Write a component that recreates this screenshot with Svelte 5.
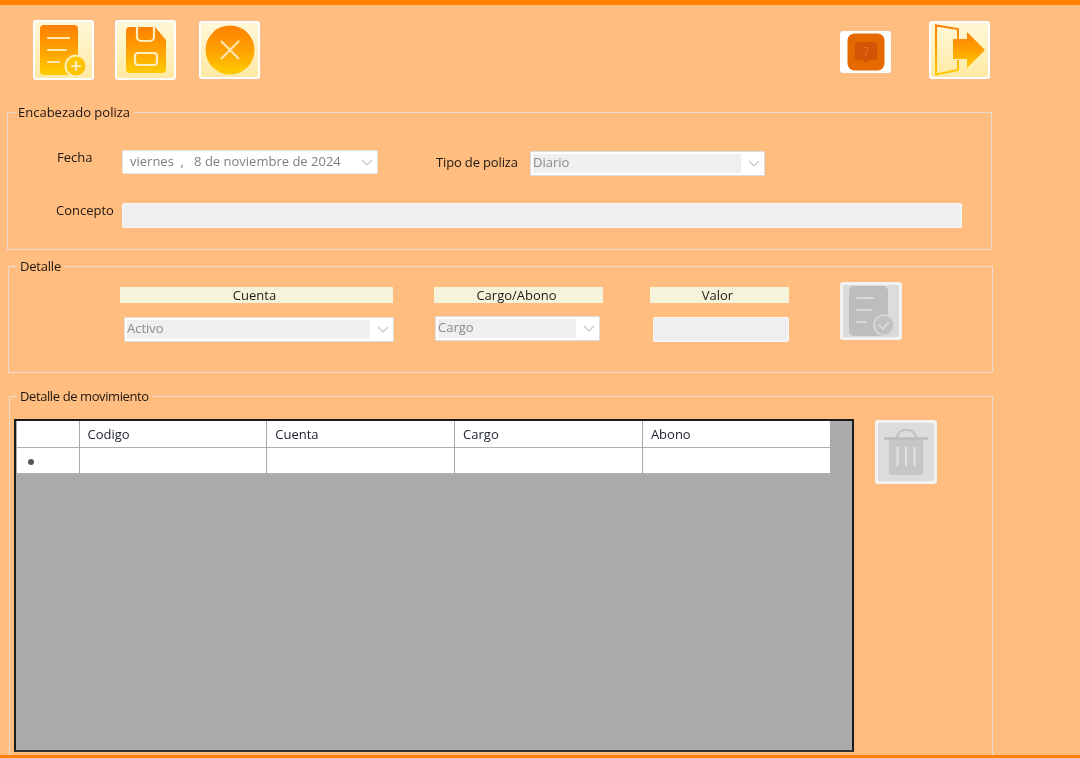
<script>
  const cols = ['Codigo', 'Cuenta', 'Cargo', 'Abono'];
</script>

<div class="page">
  <div class="toolbar">
    <button class="tool b1" aria-label="Nuevo">
      <svg width="50" height="54" viewBox="0 0 50 54">
        <defs>
          <linearGradient id="g" x1="0" y1="0" x2="0" y2="1"><stop offset="0" stop-color="#ff8000"/><stop offset="0.55" stop-color="#ffa400"/><stop offset="1" stop-color="#ffcc00"/></linearGradient>
        </defs>
        <path d="M5 2h30a4 4 0 0 1 4 4v42a4 4 0 0 1-4 4H5a4 4 0 0 1-4-4V6a4 4 0 0 1 4-4z" fill="url(#g)"/>
        <path d="M9 15h21M9 27h18M9 39h11" stroke="#ffe9b0" stroke-width="2.2" fill="none" stroke-linecap="round"/>
        <circle cx="37" cy="43" r="10.5" fill="#ffc400" stroke="#ffedb8" stroke-width="2"/>
        <path d="M33 43h8M37 39v8" stroke="#ffedb8" stroke-width="2.2" stroke-linecap="round"/>
      </svg>
    </button>
    <button class="tool b2" aria-label="Guardar">
      <svg width="40" height="46" viewBox="0 0 40 46">
        <path d="M4 0h25l11 13v29a4 4 0 0 1-4 4H4a4 4 0 0 1-4-4V4a4 4 0 0 1 4-4z" fill="url(#g)"/>
        <path d="M11 0v10a4 4 0 0 0 4 4h9a4 4 0 0 0 4-4V0" fill="none" stroke="#ffedc0" stroke-width="2.2"/>
        <rect x="9" y="26" width="22" height="12" rx="3" fill="none" stroke="#ffedc0" stroke-width="2.2"/>
      </svg>
    </button>
    <button class="tool b3" aria-label="Cancelar">
      <svg width="50" height="50" viewBox="0 0 50 50">
        <circle cx="25" cy="25" r="24.5" fill="url(#g)"/>
        <path d="M16.5 16.5l17 17M33.5 16.5l-17 17" stroke="#ffe7ae" stroke-width="2.2" stroke-linecap="round"/>
      </svg>
    </button>
    <button class="tool b4" aria-label="Ayuda">
      <svg width="38" height="38" viewBox="0 0 38 38">
        <rect width="37" height="37" x="0.5" y="0.5" rx="7" fill="#e46a00"/>
        <path d="M10 9h18a2 2 0 0 1 2 2v14a2 2 0 0 1-2 2h-6l-3 3-3-3h-6a2 2 0 0 1-2-2V11a2 2 0 0 1 2-2z" fill="#d25404"/>
        <text x="19" y="23" class="q">?</text>
      </svg>
    </button>
    <button class="tool b5" aria-label="Salir">
      <svg width="52" height="52" viewBox="0 0 52 52">
        <path d="M24 17V5L2 1.5v49L24 46V36" fill="none" stroke="url(#g)" stroke-width="2"/>
        <path d="M19 15H33V8L51 26 33 44V35H19Z" fill="url(#g)"/>
      </svg>
    </button>
  </div>

  <fieldset class="group g1">
    <legend>Encabezado poliza</legend>
    <div class="row r1">
      <span class="label fecha">Fecha</span>
      <div class="date">
        <span class="dtext">viernes &nbsp;,&nbsp;&nbsp; 8 de noviembre de 2024</span>
        <svg class="chev" width="12" height="7" viewBox="0 0 12 7"><path d="M1 1l5 5 5-5" fill="none" stroke="#c4c4c4" stroke-width="1.1"/></svg>
      </div>
      <span class="label tipo">Tipo de poliza</span>
      <div class="combo ctipo">
        <span class="val">Diario</span>
        <svg class="chev" width="12" height="7" viewBox="0 0 12 7"><path d="M1 1l5 5 5-5" fill="none" stroke="#c4c4c4" stroke-width="1.1"/></svg>
      </div>
    </div>
    <div class="row r2">
      <span class="label concepto">Concepto</span>
      <div class="input inconcepto"></div>
    </div>
  </fieldset>

  <fieldset class="group g2">
    <legend>Detalle</legend>
    <div class="detail">
      <div class="col c1">
        <div class="head">Cuenta</div>
        <div class="combo ccuenta">
          <span class="val">Activo</span>
          <svg class="chev" width="12" height="7" viewBox="0 0 12 7"><path d="M1 1l5 5 5-5" fill="none" stroke="#c4c4c4" stroke-width="1.1"/></svg>
        </div>
      </div>
      <div class="col c2">
        <div class="head">Cargo/Abono</div>
        <div class="combo ccargo">
          <span class="val">Cargo</span>
          <svg class="chev" width="12" height="7" viewBox="0 0 12 7"><path d="M1 1l5 5 5-5" fill="none" stroke="#c4c4c4" stroke-width="1.1"/></svg>
        </div>
      </div>
      <div class="col c3">
        <div class="head">Valor</div>
        <div class="input invalor"></div>
      </div>
      <button class="tool off addrow" aria-label="Agregar">
        <svg width="46" height="50" viewBox="0 0 46 50">
          <rect x="1" y="0" width="39" height="50" rx="5" fill="#bdbdbd"/>
          <path d="M9 12h16M9 24h14M9 36h9" stroke="#d8d8d8" stroke-width="2" stroke-linecap="round"/>
          <circle cx="36" cy="39" r="10" fill="#c0c0c0" stroke="#d4d4d4" stroke-width="2"/>
          <path d="M31 39l4 4 6-7" fill="none" stroke="#d8d8d8" stroke-width="2"/>
        </svg>
      </button>
    </div>
  </fieldset>

  <fieldset class="group g3">
    <legend>Detalle de movimiento</legend>
    <div class="movs">
      <div class="grid">
        <div class="tr">
          <div class="rowhead hd"></div>
          {#each cols as c}<div class="cell hcell">{c}</div>{/each}
        </div>
        <div class="tr">
          <div class="rowhead"><i class="star"></i></div>
          {#each cols as c}<div class="cell"></div>{/each}
        </div>
      </div>
      <button class="tool off trash" aria-label="Eliminar">
        <svg width="44" height="46" viewBox="0 0 44 46">
          <path d="M13 9a9 8 0 0 1 19 0" fill="none" stroke="#c4c4c4" stroke-width="2.4"/>
          <path d="M5 10h34v33a3 3 0 0 1-3 3H8a3 3 0 0 1-3-3z" fill="#c6c6c6"/>
          <path d="M1 9.500h42" stroke="#bcbcbc" stroke-width="2.4" stroke-linecap="round"/>
          <path d="M13.500 18v19M22 18v19M30.500 18v19" stroke="#e2e2e2" stroke-width="2.2"/>
        </svg>
      </button>
    </div>
  </fieldset>
</div>

<style>
  :global(body) { margin: 0; background: #ffbd80; }
  .page {
    box-sizing: border-box;
    width: 1080px;
    height: 758px;
    overflow: hidden;
    background: #ffbd80;
    border-top: 5px solid #ff8000;
    border-bottom: 3px solid #ff8000;
    font-family: "Open Sans", "Noto Sans", sans-serif;
    font-size: 13px;
    color: #1e1610;
    filter: blur(0.35px);
  }
  .toolbar { display: flex; align-items: center; height: 60px; margin-top: 15px; padding-left: 33px; }
  .tool {
    box-sizing: border-box;
    display: flex; align-items: center; justify-content: center;
    padding: 0;
    border: 2px solid #fdfdfd;
    border-radius: 3px;
    box-shadow: 0 0 1px #b9c3d0;
    background: linear-gradient(#fff8d8, #ffe9a4);
    flex: none;
  }
  .b1 { width: 61px; height: 60px; }
  .b2 { width: 61px; height: 60px; margin-left: 21px; }
  .b3 { width: 61px; height: 58px; margin-left: 23px; }
  .b4 { width: 51px; height: 42px; margin: 4px 0 0 580px; background: #fff; }
  .b5 { width: 61px; height: 58px; margin-left: 38px; }
  .b4 svg { display: block; }
  .q { font: 13px "Open Sans", sans-serif; fill: #e8782a; text-anchor: middle; }

  .group {
    box-sizing: border-box;
    min-width: 0;
    margin: 0;
    padding: 0;
    border: 1.5px solid #e9dccf;
  }
  legend { padding: 0 3px; margin-left: 7px; line-height: 16px; }
  .g1 { margin: 24px 0 0 7px; width: 985px; height: 146px; padding-top: 30px; }
  .g2 { margin: 8px 0 0 8px; width: 985px; height: 115px; }
  .g2 legend { margin-left: 8px; letter-spacing: -0.2px; }
  .g3 { margin: 15px 0 0 9px; width: 984px; height: 372px; padding: 15px 0 0 4px; }
  .g3 legend { margin-left: 3px; letter-spacing: -0.4px; }

  .row { display: flex; }
  .r1 { height: 30px; padding-left: 114px; }
  .r2 { margin-top: 23px; padding-left: 48px; height: 26px; }
  .label { flex: none; }
  .fecha { position: relative; left: -65px; top: -2px; width: 0; white-space: nowrap; }
  .date {
    box-sizing: border-box;
    width: 256px; height: 24px;
    background: #fff;
    border: 1px solid #e3e3e3;
    border-radius: 2px;
    display: flex; align-items: center; justify-content: space-between;
    padding: 0 4px 2px 7px;
    color: #7f7f85;
  }
  .dtext { white-space: nowrap; }
  .date .chev { margin: 2px 0 0; }
  .tipo { margin: 3px 0 0 58px; width: 94px; letter-spacing: -0.15px; }
  .combo {
    box-sizing: border-box;
    height: 25px;
    background: #fff;
    border: 1px solid #dcdcdc;
    border-radius: 1px;
    padding: 2px;
    display: flex; align-items: center;
    color: #8a8a90;
  }
  .ctipo { width: 235px; margin-top: 1px; }
  .val { flex: 1; height: 100%; background: #efefef; line-height: 17px; }
  .chev { flex: none; margin: 0 2px 0 7px; }
  .input {
    box-sizing: border-box;
    height: 25px;
    background: #efefef;
    border: 1.5px solid #f8f8f8;
    border-radius: 2px;
  }
  .concepto { width: 66px; margin-top: -2px; }
  .inconcepto { width: 840px; }

  .detail { display: flex; align-items: flex-start; padding: 13px 0 0 111px; }
  .col { flex: none; display: flex; flex-direction: column; }
  .head { height: 16px; line-height: 16px; background: #f5f3d9; text-align: center; color: #1f1a18; padding-right: 4px; }
  .c1 { width: 273px; }
  .c2 { width: 169px; margin-left: 41px; }
  .c3 { width: 139px; margin-left: 47px; }
  .ccuenta { width: 270px; margin: 14px 0 0 4px; }
  .ccargo { width: 165px; margin: 13px 0 0 1px; }
  .invalor { width: 136px; margin: 14px 0 0 3px; }
  .off { background: #dcdcdc; border: 3px solid #f2f2f2; box-shadow: none; }
  .addrow { width: 62px; height: 58px; margin: -5px 0 0 51px; }

  .movs { display: flex; align-items: flex-start; }
  .grid {
    box-sizing: border-box;
    width: 840px; height: 333px;
    background: #ababab;
    border: 2px solid #1b1b1b;
    border-bottom-color: #333;
    padding: 0 0 0 1px;
    flex: none;
  }
  .tr { display: flex; height: 26.5px; }
  .rowhead { flex: none; box-sizing: border-box; width: 62.5px; background: #fff; border-right: 1.5px solid #a8a8a8; border-bottom: 1.5px solid #b0b0b0; display: flex; align-items: center; padding: 3px 0 0 11px; }
  .cell { flex: none; box-sizing: border-box; width: 187.8px; background: #fff; border-right: 1.5px solid #a8a8a8; border-bottom: 1.5px solid #b0b0b0; padding-left: 8px; line-height: 26.5px; }
  .hcell { color: #1b2030; }
  .star { display: block; width: 6px; height: 6px; border-radius: 50%; background: #555; }
  .trash { width: 62px; height: 64px; margin: 1px 0 0 21px; }
</style>
